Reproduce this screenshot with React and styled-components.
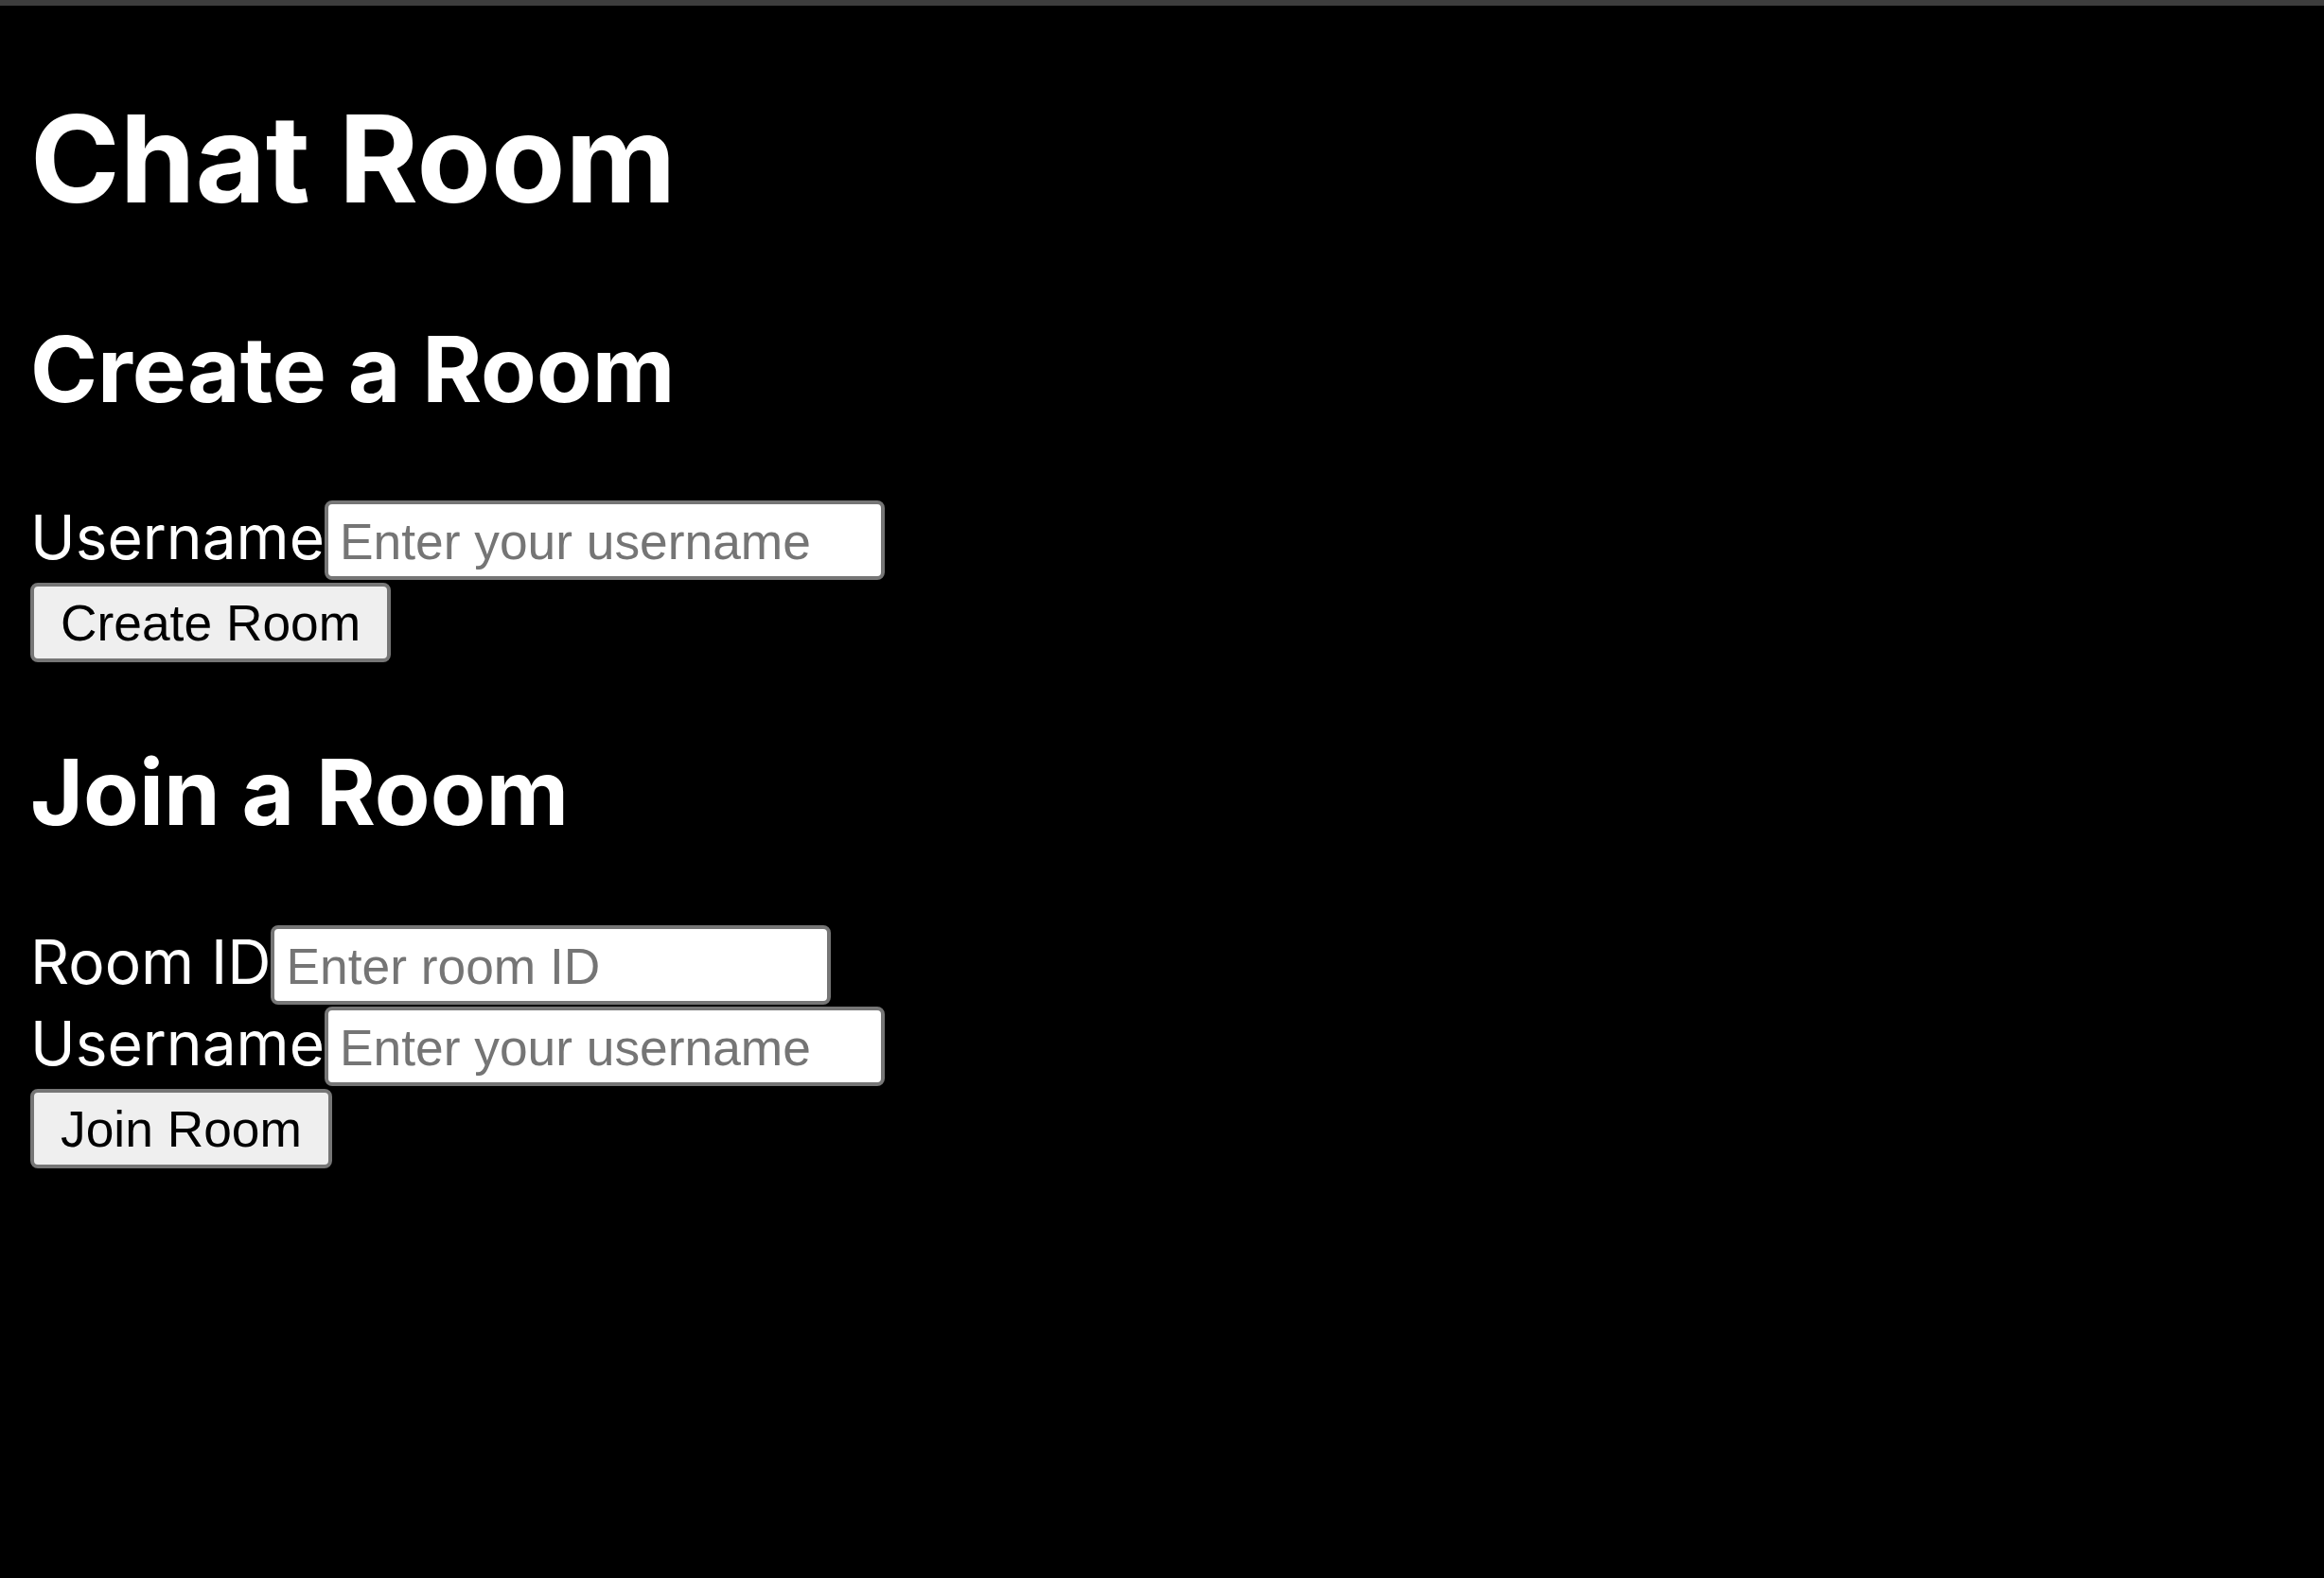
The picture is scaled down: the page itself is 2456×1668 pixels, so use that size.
import React from 'react';
import styled, { createGlobalStyle } from 'styled-components';

const GlobalStyle = createGlobalStyle`
    html, body {
        margin: 0;
        padding: 0;
        background-color: #000000;
    }
    body {
        font-family: 'Inter', 'Liberation Sans', sans-serif;
        color: #ffffff;
    }
`;

const TopBar = styled.div`
    height: 6px;
    background-color: #3d3d3d;
`;

const Page = styled.div`
    box-sizing: border-box;
    min-height: 1662px;
    padding: 98px 32px 0;
    background-color: #000000;
`;

const Title = styled.h1`
    margin: 0;
    font-size: 128px;
    line-height: 128px;
    font-weight: 700;
    color: #ffffff;
`;

const SectionTitle = styled.h2`
    margin: ${(p) => p.$top}px 0 0;
    font-size: 96px;
    line-height: 96px;
    font-weight: 700;
    color: #ffffff;
`;

const Form = styled.div`
    display: flex;
    flex-direction: column;
    align-items: flex-start;
    gap: 2px;
    margin-top: ${(p) => p.$top}px;
`;

const Row = styled.div`
    display: flex;
    align-items: baseline;
`;

const Label = styled.label`
    font-size: 64px;
    line-height: 64px;
    font-weight: 400;
    color: #ffffff;
`;

const Input = styled.input`
    box-sizing: border-box;
    width: 592px;
    height: 84px;
    padding: 2px 12px 0;
    border: 4px solid #767676;
    border-radius: 8px;
    background: #ffffff;
    font-family: 'Liberation Sans', Arial, sans-serif;
    font-size: 53.33px;
    color: #000000;
    outline: none;

    &::placeholder {
        color: #757575;
    }
`;

const Button = styled.button`
    box-sizing: border-box;
    height: 84px;
    margin-top: 1px;
    padding: 0 28px;
    border: 4px solid #767676;
    border-radius: 8px;
    background: #efefef;
    font-family: 'Liberation Sans', Arial, sans-serif;
    font-size: 53.33px;
    color: #000000;
    cursor: pointer;
`;

const App = () => {

    return (
        <>
            <GlobalStyle />
            <TopBar />
            <Page>
                <Title>Chat Room</Title>

                <SectionTitle $top={110}>Create a Room</SectionTitle>
                <Form $top={91}>
                    <Row>
                        <Label htmlFor="create-username">Username</Label>
                        <Input id="create-username" placeholder="Enter your username" />
                    </Row>
                    <Button>Create Room</Button>
                </Form>

                <SectionTitle $top={89}>Join a Room</SectionTitle>
                <Form $top={93}>
                    <Row>
                        <Label htmlFor="room-id">Room ID</Label>
                        <Input id="room-id" placeholder="Enter room ID" />
                    </Row>
                    <Row>
                        <Label htmlFor="join-username">Username</Label>
                        <Input id="join-username" placeholder="Enter your username" />
                    </Row>
                    <Button>Join Room</Button>
                </Form>
            </Page>
        </>
)};

export default App;
